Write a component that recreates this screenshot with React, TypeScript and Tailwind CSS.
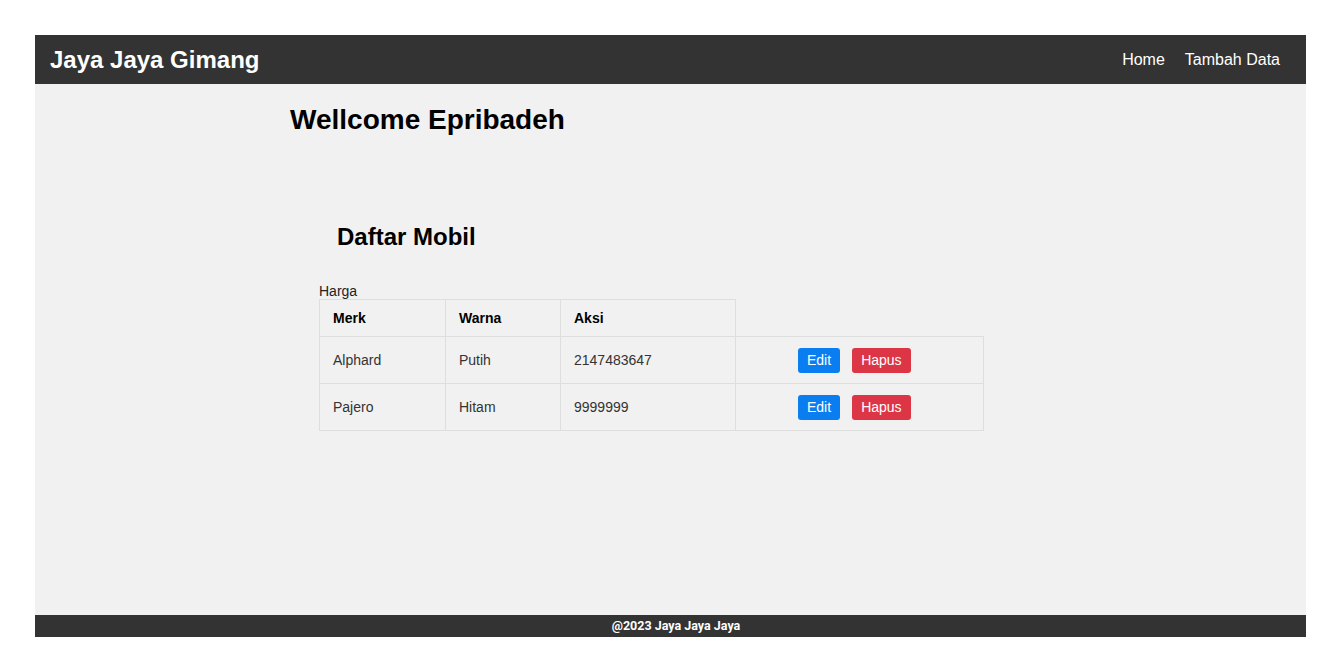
import React from "react"

type Mobil = {
  merk: string
  warna: string
  harga: string
}

const mobil: Mobil[] = [
  { merk: "Alphard", warna: "Putih", harga: "2147483647" },
  { merk: "Pajero", warna: "Hitam", harga: "9999999" },
]

const App: React.FC = () => {
  return (
    <div className="min-h-screen bg-white px-[35px] pt-[35px] font-['Liberation_Sans',Arial,sans-serif]">
      <nav className="flex h-[49px] items-center justify-between bg-[#333333] pl-[15px] pr-[26px]">
        <h1 className="text-[24px] font-bold text-white">Jaya Jaya Gimang</h1>
        <div className="flex gap-[20px] text-[16px] text-white">
          <a href="#">Home</a>
          <a href="#">Tambah Data</a>
        </div>
      </nav>

      <main className="h-[531px] bg-[#f1f1f1]">
        <h2 className="pl-[255px] pt-[20px] text-[28px] font-bold leading-[32px] text-black">
          Wellcome Epribadeh
        </h2>

        <h3 className="pl-[302px] pt-[87px] text-[24px] font-bold leading-[28px] text-black">
          Daftar Mobil
        </h3>

        <div className="pl-[284px] pt-[32px]">
          <div className="text-[14px] leading-[16px] text-[#222]">Harga</div>
          <table className="border-collapse text-[14px] text-[#333]">
            <thead>
              <tr className="h-[37px]">
                <th className="w-[126px] border border-[#dedede] px-[13px] text-left font-bold text-black">Merk</th>
                <th className="w-[115px] border border-[#dedede] px-[13px] text-left font-bold text-black">Warna</th>
                <th className="w-[175px] border border-[#dedede] px-[13px] text-left font-bold text-black">Aksi</th>
              </tr>
            </thead>
            <tbody>
              {mobil.map((m) => (
                <tr key={m.merk} className="h-[47px]">
                  <td className="border border-[#dedede] px-[13px]">{m.merk}</td>
                  <td className="border border-[#dedede] px-[13px]">{m.warna}</td>
                  <td className="border border-[#dedede] px-[13px]">{m.harga}</td>
                  <td className="w-[248px] border border-[#dedede] pl-[62px]">
                    <div className="flex gap-[12px]">
                      <button className="h-[25px] rounded-[3px] bg-[#0a7ef0] px-[9px] text-[14px] text-white">
                        Edit
                      </button>
                      <button className="h-[25px] rounded-[3px] bg-[#dc3545] px-[9px] text-[14px] text-white">
                        Hapus
                      </button>
                    </div>
                  </td>
                </tr>
              ))}
            </tbody>
          </table>
        </div>
      </main>

      <footer className="flex h-[22px] items-center justify-center bg-[#333333] pl-[11px] font-['Roboto',sans-serif] text-[12.5px] font-bold text-white">
        @2023 Jaya Jaya Jaya
      </footer>
    </div>
  )
}

export default App
